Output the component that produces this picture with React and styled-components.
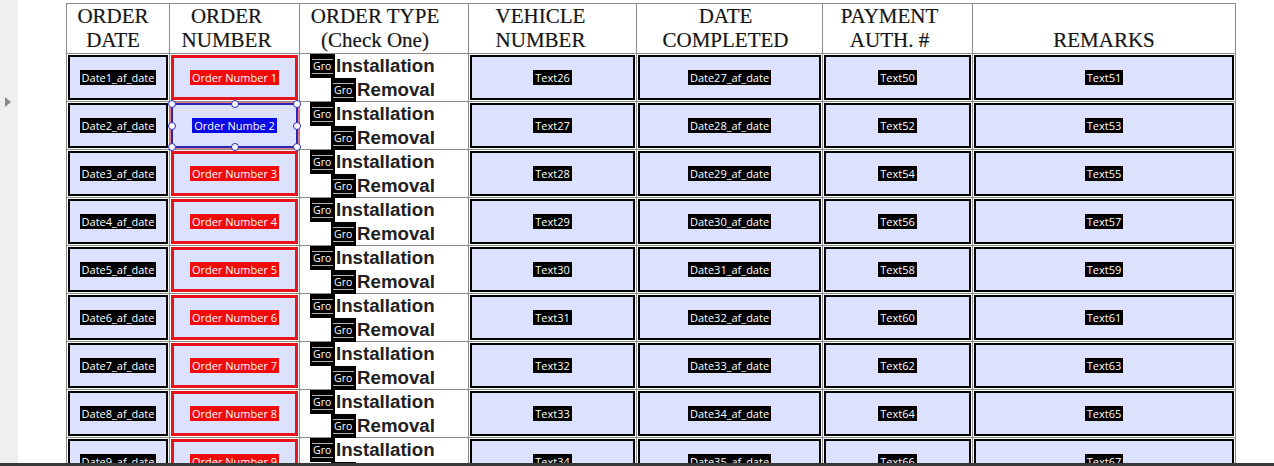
import React from "react";
import styled, { createGlobalStyle } from "styled-components";

const Global = createGlobalStyle`
  html, body { margin: 0; padding: 0; height: 100%; overflow: hidden; background: #fff; }
  #root { height: 100%; }
`;

const Screen = styled.div`
  height: 466px;
  display: flex;
  flex-direction: column;
  overflow: hidden;
`;

const Main = styled.div`
  flex: 1;
  display: flex;
  min-height: 0;
  overflow: hidden;
`;

const Gutter = styled.div`
  width: 18px;
  flex: none;
  box-sizing: border-box;
  background: #efefef;
  padding: 97px 0 0 5px;
`;

const Arrow = styled.div`
  width: 0;
  height: 0;
  border-top: 5.5px solid transparent;
  border-bottom: 5.5px solid transparent;
  border-left: 6px solid #8a8a8a;
`;

const Page = styled.div`
  flex: 1;
  min-width: 0;
  background: #fff;
  padding: 3px 0 0 48px;
  overflow: hidden;
`;

const Table = styled.div`
  display: grid;
  grid-template-columns: 103px 130px 169px 168px 186px 150px 263px;
  grid-template-rows: 50px;
  grid-auto-rows: 48px;
  width: max-content;
  border-top: 1px solid #8c8c8c;
  border-left: 1px solid #8c8c8c;
`;

const Cell = styled.div`
  box-sizing: border-box;
  min-width: 0;
  border-right: 1px solid #8c8c8c;
  border-bottom: 1px solid #8c8c8c;
  padding: 1px 1px 1px 1px;
`;

const Head = styled(Cell)`
  padding: 1px ${(p) => p.$shift * 2}px 0 0;
  font: 21px/23.5px "Liberation Serif", "Times New Roman", serif;
  color: #161616;
  text-align: center;
  white-space: nowrap;
  -webkit-text-stroke: 0.2px #161616;
`;

const borders = {
  black: "2px solid #000",
  red: "3px solid #e8141b",
  blue: "2px solid #2626b8",
};

const tagBg = {
  black: "#000",
  red: "#f00a0a",
  blue: "#0a0ae6",
};

const Field = styled.div`
  position: relative;
  box-sizing: border-box;
  height: 100%;
  border: ${(p) => borders[p.$tone]};
  background: #dce1fd;
  display: flex;
  align-items: center;
  justify-content: center;
  box-shadow: ${(p) => (p.$tone === "blue" ? "0 0 0 1px rgba(230,20,27,0.55)" : "none")};
`;

const Tag = styled.span`
  font: 11px/15px "Open Sans", "Noto Sans", sans-serif;
  color: #fff;
  background: ${(p) => tagBg[p.$tone]};
  padding: 0 2px;
  white-space: nowrap;
`;

const Handles = styled.span`
  position: absolute;
  inset: -1px;
  pointer-events: none;
`;

const Handle = styled.span`
  position: absolute;
  left: ${(p) => p.$x}%;
  top: ${(p) => p.$y}%;
  width: 8px;
  height: 8px;
  box-sizing: border-box;
  border-radius: 50%;
  background: #fff;
  border: 1.5px solid #2a2ac0;
  transform: translate(-50%, -50%);
`;

const TypeCell = styled(Cell)`
  padding: 0;
  display: flex;
  flex-direction: column;
`;

const TypeLine = styled.div`
  display: flex;
  align-items: center;
  height: 24px;
  padding-left: ${(p) => p.$indent}px;
`;

const Check = styled.span`
  flex: none;
  width: 25px;
  height: 24px;
  box-sizing: border-box;
  background: #000;
  border: 2px solid #000;
  overflow: hidden;
  display: flex;
  flex-direction: column;
  justify-content: center;
`;

const CheckLabel = styled.span`
  font: 10.5px/13px "Open Sans", "Noto Sans", sans-serif;
  color: #fff;
  border-top: 1px solid #b5b5b5;
  border-bottom: 1px solid #b5b5b5;
  padding-left: 1px;
  white-space: nowrap;
`;

const TypeText = styled.span`
  font: bold 18.7px/24px "Liberation Sans", Arial, sans-serif;
  color: #222;
  margin-left: 1px;
  white-space: nowrap;
`;

const Bar = styled.div`
  height: 3px;
  flex: none;
  background: #383838;
`;

const headers = [
  { lines: ["ORDER", "DATE"], shift: 5 },
  { lines: ["ORDER", "NUMBER"], shift: 8 },
  { lines: ["ORDER TYPE", "(Check One)"], shift: 9 },
  { lines: ["VEHICLE", "NUMBER"], shift: 12 },
  { lines: ["DATE", "COMPLETED"], shift: 4 },
  { lines: ["PAYMENT", "AUTH. #"], shift: 8 },
  { lines: ["\u00a0", "REMARKS"], shift: 0 },
];

const rows = Array.from({ length: 9 }, (_, k) => {
  const i = k + 1;
  return {
    date: `Date${i}_af_date`,
    order: i === 2 ? "Order Numbe 2" : `Order Number ${i}`,
    selected: i === 2,
    vehicle: `Text${25 + i}`,
    completed: `Date${26 + i}_af_date`,
    payment: `Text${48 + 2 * i}`,
    remarks: `Text${49 + 2 * i}`,
  };
});

const handlePts = [
  [0, 0], [50, 0], [100, 0],
  [0, 50], [100, 50],
  [0, 100], [50, 100], [100, 100],
];

function FormField({ label, tone = "black", selected }) {
  return (
    <Field $tone={tone}>
      <Tag $tone={tone}>{label}</Tag>
      {selected && (
        <Handles>
          {handlePts.map(([x, y]) => (
            <Handle key={`${x}-${y}`} $x={x} $y={y} />
          ))}
        </Handles>
      )}
    </Field>
  );
}

function OrderType() {
  return (
    <TypeCell>
      <TypeLine $indent={10}>
        <Check>
          <CheckLabel>Gro</CheckLabel>
        </Check>
        <TypeText>Installation</TypeText>
      </TypeLine>
      <TypeLine $indent={31}>
        <Check>
          <CheckLabel>Gro</CheckLabel>
        </Check>
        <TypeText>Removal</TypeText>
      </TypeLine>
    </TypeCell>
  );
}

export default function App() {
  return (
    <>
      <Global />
      <Screen>
        <Main>
          <Gutter>
            <Arrow />
          </Gutter>
          <Page>
            <Table>
              {headers.map((h, idx) => (
                <Head key={idx} $shift={h.shift}>
                  {h.lines[0]}
                  <br />
                  {h.lines[1]}
                </Head>
              ))}
              {rows.map((r, idx) => (
                <React.Fragment key={idx}>
                  <Cell>
                    <FormField label={r.date} />
                  </Cell>
                  <Cell>
                    <FormField
                      label={r.order}
                      tone={r.selected ? "blue" : "red"}
                      selected={r.selected}
                    />
                  </Cell>
                  <OrderType />
                  <Cell>
                    <FormField label={r.vehicle} />
                  </Cell>
                  <Cell>
                    <FormField label={r.completed} />
                  </Cell>
                  <Cell>
                    <FormField label={r.payment} />
                  </Cell>
                  <Cell>
                    <FormField label={r.remarks} />
                  </Cell>
                </React.Fragment>
              ))}
            </Table>
          </Page>
        </Main>
        <Bar />
      </Screen>
    </>
  );
}
